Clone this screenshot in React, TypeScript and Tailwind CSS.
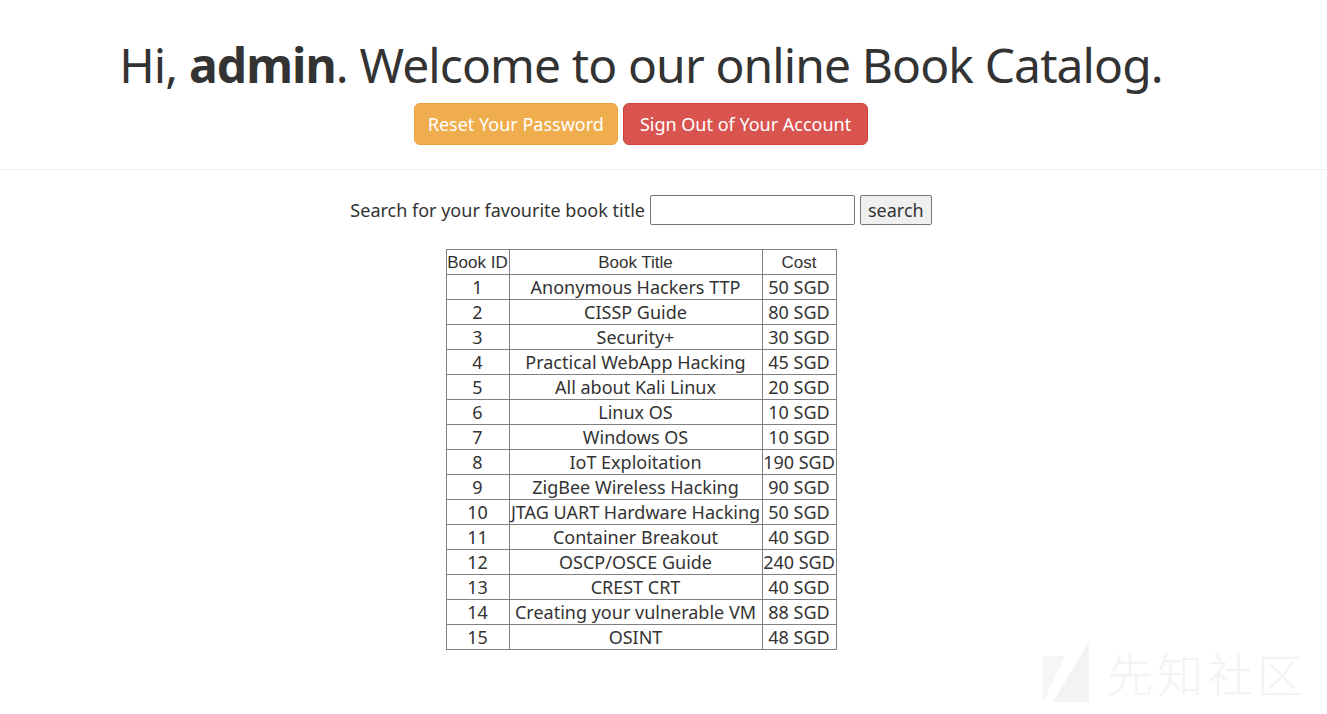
const books = [
  [1, "Anonymous Hackers TTP", "50 SGD"],
  [2, "CISSP Guide", "80 SGD"],
  [3, "Security+", "30 SGD"],
  [4, "Practical WebApp Hacking", "45 SGD"],
  [5, "All about Kali Linux", "20 SGD"],
  [6, "Linux OS", "10 SGD"],
  [7, "Windows OS", "10 SGD"],
  [8, "IoT Exploitation", "190 SGD"],
  [9, "ZigBee Wireless Hacking", "90 SGD"],
  [10, "JTAG UART Hardware Hacking", "50 SGD"],
  [11, "Container Breakout", "40 SGD"],
  [12, "OSCP/OSCE Guide", "240 SGD"],
  [13, "CREST CRT", "40 SGD"],
  [14, "Creating your vulnerable VM", "88 SGD"],
  [15, "OSINT", "48 SGD"],
];

const App = () => {
  return (
    <div className="relative min-h-[714px] bg-white text-[#333] font-['Noto_Sans',sans-serif]">
      <div className="pr-[45px] pt-[35px] flex flex-col items-center">
        <h1 className="text-[48px] leading-[60px] tracking-[-0.9px]">
          Hi, <b>admin</b>. Welcome to our online Book Catalog.
        </h1>
        <div className="flex gap-[5px] mt-[8px]">
          <button className="h-[42px] px-[13px] text-[18px] text-white bg-[#f0ad4e] border border-[#eea236] rounded-[6px]">
            Reset Your Password
          </button>
          <button className="h-[42px] px-[16px] text-[18px] text-white bg-[#d9534f] border border-[#d43f3a] rounded-[6px]">
            Sign Out of Your Account
          </button>
        </div>
      </div>
      <hr className="mt-[24px] border-t border-[#eee]" />
      <div className="pr-[45px] flex flex-col items-center">
        <form className="flex items-center gap-[5px] mt-[25px] text-[18px]">
          <label>Search for your favourite book title</label>
          <input
            type="text"
            className="w-[205px] h-[30px] border border-[#767676] rounded-[2px]"
          />
          <button
            type="button"
            className="h-[30px] px-[7px] bg-[#efefef] border border-[#767676] rounded-[2px]"
          >
            search
          </button>
        </form>
        <table className="mt-[24px] border-collapse text-[18px]">
          <thead>
            <tr className="font-['Liberation_Sans',sans-serif] text-[17px] h-[25px] leading-[23px]">
              <th className="border border-[#808080] font-normal px-0 w-[63px] whitespace-nowrap">Book ID</th>
              <th className="border border-[#808080] font-normal w-[253px]">Book Title</th>
              <th className="border border-[#808080] font-normal w-[74px]">Cost</th>
            </tr>
          </thead>
          <tbody>
            {books.map(([id, title, cost]) => (
              <tr key={id} className="h-[25px] leading-[23px]">
                <td className="border border-[#808080] text-center">{id}</td>
                <td className="border border-[#808080] text-center whitespace-nowrap">{title}</td>
                <td className="border border-[#808080] text-center whitespace-nowrap">{cost}</td>
              </tr>
            ))}
          </tbody>
        </table>
      </div>
      <div className="absolute right-[20px] bottom-[12px] flex items-center gap-[14px] text-[#f3f3f3] select-none">
        <svg width="50" height="60" viewBox="0 0 50 60">
          <polygon points="0,60 0,14 22,14" fill="#f6f6f6" />
          <polygon points="10,60 46,0 46,60" fill="#f3f3f3" />
        </svg>
        <span className="text-[46px] leading-none font-['Noto_Sans_CJK_SC',sans-serif] font-light tracking-[4px]">
          先知社区
        </span>
      </div>
    </div>
  );
};

export default App;
